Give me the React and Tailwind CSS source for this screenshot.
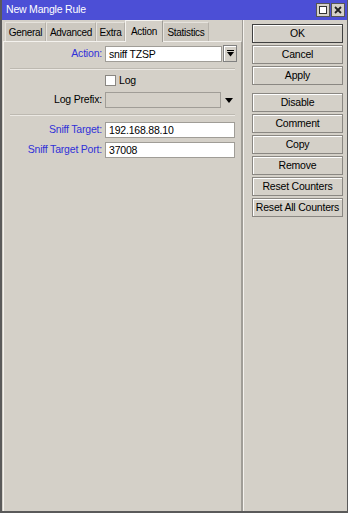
import React from 'react';

const font = { fontFamily: '"Liberation Sans", Arial, sans-serif' };

const tabs = [
  ['General', 'w-[41px]'],
  ['Advanced', 'w-[50px]'],
  ['Extra', 'w-[29px]'],
  ['Action', 'w-[38px]'],
  ['Statistics', 'w-[46px]'],
];
const buttons = [
  ['OK', true],
  ['Cancel'],
  ['Apply'],
  null,
  ['Disable'],
  ['Comment'],
  ['Copy'],
  ['Remove'],
  ['Reset Counters'],
  ['Reset All Counters'],
];

const WinButton = ({ children, primary }) => (
  <div
    className={`h-[19px] flex items-center justify-center whitespace-nowrap text-[10.5px] tracking-[-0.2px] text-black bg-[#d4d0c8] border ${
      primary ? 'border-[#404040]' : 'border-[#8a8782]'
    } shadow-[inset_1px_1px_0_#ffffff]`}
  >
    {children}
  </div>
);

const Label = ({ children, blue }) => (
  <div className={`w-[101px] pr-[3px] text-right whitespace-nowrap text-[10.5px] tracking-[-0.2px] ${blue ? 'text-[#3030d8]' : 'text-black'}`}>
    {children}
  </div>
);

const Field = ({ value, disabled, className = '' }) => (
  <div
    className={`h-[16px] border border-[#a09d97] ${disabled ? 'bg-[#d4d0c8]' : 'bg-white'} text-[10.5px] tracking-[-0.2px] text-black pl-[3px] leading-[14px] ${className}`}
  >
    {value}
  </div>
);

export default function App() {
  return (
    <div className="w-[348px] h-[513px] bg-[#d4d0c8] flex flex-col border-l-2 border-b-2 border-r border-[#5a5a5a] overflow-hidden tracking-[-0.2px]" style={font}>
      <div className="h-[20px] bg-[#4c4fd6] flex items-center justify-between pl-[4px] pr-[2px]">
        <span className="text-white text-[10.5px]">New Mangle Rule</span>
        <div className="flex gap-[1px]">
          <div className="w-[14px] h-[14px] bg-[#d4d0c8] border border-[#555] flex items-center justify-center">
            <div className="w-[8px] h-[8px] border border-[#333] bg-white" />
          </div>
          <div className="w-[14px] h-[14px] bg-[#d4d0c8] border border-[#555] flex items-center justify-center">
            <svg width="8" height="8" viewBox="0 0 8 8">
              <path d="M1 1L7 7M7 1L1 7" stroke="#222" strokeWidth="1.8" />
            </svg>
          </div>
        </div>
      </div>
      <div className="flex flex-1">
        <div className="w-[240px] flex flex-col pl-[1px]">
          <div className="flex items-end h-[21px] pl-[2px]">
            {tabs.map(([t, w]) =>
              t === 'Action' ? (
                <div
                  key={t}
                  className={`${w} h-[22px] flex items-center justify-center whitespace-nowrap text-[10px] tracking-[-0.3px] bg-[#d4d0c8] border-t border-l border-r border-[#f4f2ee] border-r-[#a09d97] relative top-[1px] -mt-[2px]`}
                >
                  {t}
                </div>
              ) : (
                <div
                  key={t}
                  className={`${w} h-[19px] flex items-center justify-center whitespace-nowrap text-[10px] tracking-[-0.3px] bg-[#ccc8c0] border-t border-l border-r border-[#e6e3dd] border-r-[#b5b1aa]`}
                >
                  {t}
                </div>
              )
            )}
          </div>
          <div className="flex-1 border border-[#f4f2ee] border-r-[#a09d97] border-b-0 pt-[3px]">
            <div className="flex items-center h-[17px]">
              <Label blue>Action:</Label>
              <Field value="sniff TZSP" className="w-[117px]" />
              <div className="ml-[1px] w-[14px] h-[17px] border border-[#808080] bg-[#d4d0c8] flex items-center justify-center shadow-[inset_1px_1px_0_#fff]">
                <svg width="7" height="7" viewBox="0 0 7 7">
                  <path d="M0 0.5H7" stroke="#000" strokeWidth="1" />
                  <path d="M0 2L7 2L3.5 6.5Z" fill="#000" />
                </svg>
              </div>
            </div>
            <div className="mx-[6px] mt-[6px] h-[2px] border-t border-[#bdb9b1] border-b border-b-[#ece9e4]" />
            <div className="flex items-center h-[11px] mt-[5px]">
              <div className="w-[101px]" />
              <div className="w-[11px] h-[11px] bg-white border border-[#8a8782]" />
              <span className="ml-[3px] text-[10.5px]">Log</span>
            </div>
            <div className="flex items-center h-[16px] mt-[6px]">
              <Label>Log Prefix:</Label>
              <Field disabled className="w-[116px]" />
              <svg className="ml-[4px]" width="8" height="5" viewBox="0 0 8 5">
                <path d="M0 0H8L4 5Z" fill="#000" />
              </svg>
            </div>
            <div className="mx-[6px] mt-[6px] h-[2px] border-t border-[#bdb9b1] border-b border-b-[#ece9e4]" />
            <div className="flex items-center h-[16px] mt-[6px]">
              <Label blue>Sniff Target:</Label>
              <Field value="192.168.88.10" className="w-[130px]" />
            </div>
            <div className="flex items-center h-[16px] mt-[4px]">
              <Label blue>Sniff Target Port:</Label>
              <Field value="37008" className="w-[130px]" />
            </div>
          </div>
        </div>
        <div className="w-[2px] border-l border-[#a09d97] border-r border-r-[#f4f2ee]" />
        <div className="flex-1 flex flex-col gap-[2px] pt-[4px] pl-[8px] pr-[4px]">
          {buttons.map((b, i) =>
            b ? (
              <WinButton key={i} primary={b[1]}>
                {b[0]}
              </WinButton>
            ) : (
              <div key={i} className="h-[4px]" />
            )
          )}
        </div>
      </div>
    </div>
  );
}
